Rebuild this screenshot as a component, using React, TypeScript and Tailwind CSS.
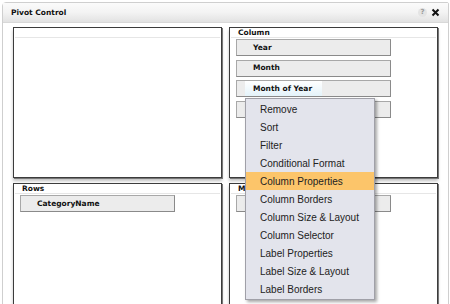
const menuItems = [
  "Remove",
  "Sort",
  "Filter",
  "Conditional Format",
  "Column Properties",
  "Column Borders",
  "Column Size & Layout",
  "Column Selector",
  "Label Properties",
  "Label Size & Layout",
  "Label Borders",
];

function FieldBox({ label, active }: { label?: string; active?: boolean }) {
  return (
    <div className="h-[17px] w-[155px] border border-[#a8a8a8] border-r-[#8a8a8a] border-b-[#8a8a8a] bg-[#ececec] flex items-center">
      {label && (
        <div
          className={
            active
              ? "ml-[8px] h-full flex items-center pl-[8px] w-[77px] bg-gradient-to-b from-[#ffffff] to-[#e4f3fa]"
              : "pl-[16px] flex items-center"
          }
        >
          <span className="text-[7.5px] leading-none font-bold text-[#111]">{label}</span>
        </div>
      )}
    </div>
  );
}

function Panel({
  title,
  children,
  className = "",
}: {
  title?: string;
  children?: React.ReactNode;
  className?: string;
}) {
  return (
    <div
      className={
        "relative bg-white border border-[#3c3c3c] shadow-[1px_1px_0_#777,0_3px_3px_rgba(0,0,0,0.25)] " +
        className
      }
    >
      <div className="h-[10px] mx-[1px] border-b border-[#e6e6e6] flex items-center pl-[7px]">
        {title && <span className="text-[7.5px] font-bold text-[#111] leading-none">{title}</span>}
      </div>
      <div className="flex flex-col gap-[3.5px] pl-[6px] pt-[1px]">{children}</div>
    </div>
  );
}

export default function App() {
  return (
    <div className="w-[450px] h-[304px] overflow-hidden bg-white font-['DejaVu_Sans',sans-serif] pt-[2px] pl-[2px]">
      <div className="w-[447px] h-[310px] border border-[#cfcfcf] rounded-tl-[4px] rounded-tr-[2px] bg-white">
        <div className="h-[20px] flex items-center justify-between pl-[8px] pr-[8px] bg-gradient-to-b from-[#fbfbfb] via-[#f3f3f3] to-[#e2e2e2] border-b border-[#d8d8d8]">
          <span className="text-[7.5px] font-bold text-[#111]">Pivot Control</span>
          <div className="flex items-center gap-[4px]">
            <span className="w-[9px] h-[9px] rounded-full bg-[#e4e4e4] text-[#9a9a9a] text-[7px] font-bold flex items-center justify-center leading-none">
              ?
            </span>
            <svg width="9" height="9" viewBox="0 0 9 9">
              <path d="M1.5 1.5 L7.5 7.5 M7.5 1.5 L1.5 7.5" stroke="#111" strokeWidth="2" />
            </svg>
          </div>
        </div>
        <div className="grid grid-cols-[209px_209px] gap-x-[7px] gap-y-[5px] pl-[10px] pt-[4px]">
          <Panel className="h-[151px]" />
          <Panel title="Column" className="h-[151px] z-10">
            <FieldBox label="Year" />
            <FieldBox label="Month" />
            <FieldBox label="Month of Year" active />
            <FieldBox />
            <div className="absolute left-[15px] top-[70px] w-[130px] bg-[#e3e4ec] border border-[#a0a0a8] shadow-[2px_2px_3px_rgba(0,0,0,0.35)] py-[1px] font-['Liberation_Sans',sans-serif]">
              {menuItems.map((m) => (
                <div
                  key={m}
                  className={
                    "h-[18px] flex items-center pl-[14px] text-[10px] text-[#222] " +
                    (m === "Column Properties" ? "bg-[#fcc56a]" : "")
                  }
                >
                  {m}
                </div>
              ))}
            </div>
          </Panel>
          <Panel title="Rows" className="h-[140px]">
            <FieldBox label="CategoryName" />
          </Panel>
          <Panel title="Measures" className="h-[140px]">
            <FieldBox />
          </Panel>
        </div>
      </div>
    </div>
  );
}
